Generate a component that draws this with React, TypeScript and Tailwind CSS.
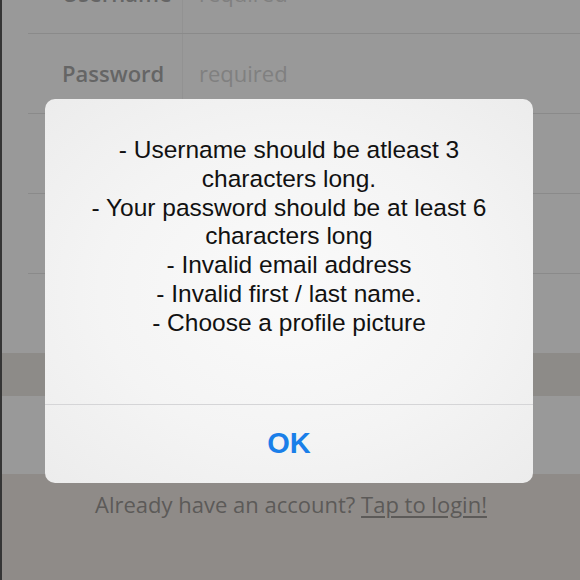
import { ReactNode } from "react";

const rows = [
  { label: "Username", hint: "required" },
  { label: "Password", hint: "required" },
  { label: "", hint: "" },
  { label: "", hint: "" },
  { label: "", hint: "" },
];

const messages = [
  "- Username should be atleast 3",
  "characters long.",
  "- Your password should be at least 6",
  "characters long",
  "- Invalid email address",
  "- Invalid first / last name.",
  "- Choose a profile picture",
];

function FormRow({ label, hint, last }: { label: string; hint: string; last?: boolean }) {
  return (
    <div
      className={`ml-[26px] flex items-stretch ${
        last ? "h-[79px]" : "h-[80px] border-b border-[#8a8a8a]"
      }`}
    >
      <div className="flex w-[155px] shrink-0 items-center border-r border-[#929292] pl-[34px] text-[22px] font-semibold text-[#656565]">
        {label}
      </div>
      <div className="flex items-center pl-[16px] text-[22px] text-[#808080]">{hint}</div>
    </div>
  );
}

function Alert({ children }: { children: ReactNode }) {
  return (
    <div className="absolute left-[45px] top-[99px] flex w-[488px] flex-col overflow-hidden rounded-[10px] bg-[radial-gradient(ellipse_at_center,#fafafa_0%,#f4f4f4_55%,#ececec_100%)]">
      <div
        className="h-[305px] pt-[37px] text-center text-[24.5px] leading-[28.8px] text-[#111]"
        style={{ fontFamily: '"Liberation Sans", Arial, sans-serif' }}
      >
        {children}
      </div>
      <div className="flex h-[79px] items-center justify-center border-t border-[#d5d5d7]">
        <span
          className="text-[29px] font-bold text-[#1a7fe9]"
          style={{ fontFamily: '"Liberation Sans", Arial, sans-serif' }}
        >
          OK
        </span>
      </div>
    </div>
  );
}

export default function App() {
  return (
    <div
      className="relative flex h-[580px] w-[580px] overflow-hidden bg-[#8f8b88]"
      style={{ fontFamily: '"Open Sans", sans-serif' }}
    >
      <div className="w-[2px] shrink-0 bg-[#353535]" />
      <div className="flex flex-1 flex-col">
        {/* form table, dimmed */}
        <div className="-mt-[46px] bg-[#999999]">
          {rows.map((r, i) => (
            <FormRow key={i} label={r.label} hint={r.hint} last={i === rows.length - 1} />
          ))}
        </div>
        <div className="h-[43px] bg-[#8d8b88]" />
        <div className="h-[78px] bg-[#999999]" />
        <div className="pt-[16px] text-center text-[22px] leading-[28px] text-[#5c5a58]">
          Already have an account? <span className="underline underline-offset-[3px]">Tap to login!</span>
        </div>
      </div>

      <Alert>
        {messages.map((m) => (
          <div key={m}>{m}</div>
        ))}
      </Alert>
    </div>
  );
}
